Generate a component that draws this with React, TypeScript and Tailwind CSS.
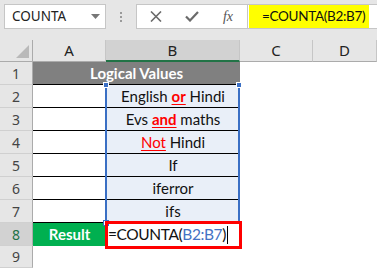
const cellFont = { fontFamily: "Lato, 'Liberation Sans', sans-serif" };
const uiFont = { fontFamily: "'Noto Sans', 'Open Sans', sans-serif" };

const values: { key: string; node: React.ReactNode }[] = [
  {
    key: "2",
    node: (
      <span>
        English <b className="text-[#ff0000] underline decoration-1 underline-offset-2">or</b> Hindi
      </span>
    ),
  },
  {
    key: "3",
    node: (
      <span>
        Evs <b className="text-[#ff0000] underline decoration-1 underline-offset-2">and</b> maths
      </span>
    ),
  },
  {
    key: "4",
    node: (
      <span>
        <span className="text-[#ff0000] underline decoration-1 underline-offset-2">Not</span> Hindi
      </span>
    ),
  },
  { key: "5", node: "If" },
  { key: "6", node: "iferror" },
  { key: "7", node: "ifs" },
];

function RowHead({ n, active = false }: { n: string; active?: boolean }) {
  return (
    <div
      style={uiFont}
      className={`flex items-center justify-center border-r border-b border-r-[#ababab] border-b-[#d0d0d0] text-[14px] ${
        active ? "bg-[#d2d2d2] text-[#217346]" : "bg-[#e6e6e6] text-[#444]"
      }`}
    >
      {n}
    </div>
  );
}

function Toolbar() {
  return (
    <div className="flex h-[40px] items-start pl-[4px] pt-[4px]">
      <div
        style={uiFont}
        className="flex h-[25px] w-[102px] shrink-0 items-center justify-between border border-[#c6c6c6] bg-white pl-[7px] pr-[5px] text-[13.5px] text-[#222]"
      >
        <span>COUNTA</span>
        <svg width="9" height="5" viewBox="0 0 9 5">
          <path d="M0 0h9L4.5 5z" fill="#777" />
        </svg>
      </div>
      <div className="flex h-[25px] w-[30px] shrink-0 flex-col items-center justify-center gap-[2px]">
        <div className="h-[2px] w-[2px] bg-[#9a9a9a]" />
        <div className="h-[2px] w-[2px] bg-[#9a9a9a]" />
        <div className="h-[2px] w-[2px] bg-[#9a9a9a]" />
      </div>
      <div className="flex h-[25px] w-[260px] shrink-0 border border-[#c6c6c6] bg-white">
        <div className="flex w-[111px] shrink-0 items-center border-r border-[#c6c6c6]">
          <div className="flex w-[37px] justify-center pl-[1px]">
            <svg width="12" height="11" viewBox="0 0 12 11">
              <path d="M1 0.5l10 10M11 0.5l-10 10" stroke="#6a6a6a" strokeWidth="1.6" />
            </svg>
          </div>
          <div className="flex w-[36px] justify-center">
            <svg width="14" height="11" viewBox="0 0 14 11">
              <path d="M1 5.5l4 4L13 1" stroke="#6a6a6a" strokeWidth="2.2" fill="none" />
            </svg>
          </div>
          <div
            className="flex w-[36px] justify-center text-[14px] italic text-[#555]"
            style={{ fontFamily: "'Liberation Serif', serif" }}
          >
            fx
          </div>
        </div>
        <div className="flex shrink-0 items-stretch pl-[1px]">
          <div
            style={cellFont}
            className="flex w-[120px] items-center whitespace-nowrap bg-[#ffff00] pl-[13px] text-[13.5px] tracking-[-0.3px] text-[#111]"
          >
            =COUNTA(B2:B7)
          </div>
        </div>
      </div>
    </div>
  );
}

export default function App() {
  return (
    <div className="h-[268px] w-[377px] overflow-hidden bg-[#e6e6e6]">
      <Toolbar />
      <div className="relative grid grid-cols-[33px_73px_134px_73px_64px] grid-rows-[22px_repeat(8,23px)_22px] bg-white">
        {/* column headers */}
        <div className="relative border-r border-b border-r-[#ababab] border-b-[#ababab] bg-[#e6e6e6]">
          <svg className="absolute bottom-[3px] right-[3px]" width="13" height="13" viewBox="0 0 13 13">
            <path d="M13 0V13H0z" fill="#b9b9b9" />
          </svg>
        </div>
        {["A", "B", "C", "D"].map((c) => (
          <div
            key={c}
            style={uiFont}
            className={`flex items-center justify-center border-r border-r-[#c6c6c6] text-[15px] text-[#222] ${
              c === "B"
                ? "border-b-2 border-b-[#217346] bg-[#d2d2d2]"
                : "border-b border-b-[#ababab] bg-[#e6e6e6]"
            }`}
          >
            {c}
          </div>
        ))}

        {/* row 1 */}
        <RowHead n="1" />
        <div
          style={cellFont}
          className="col-span-2 flex items-center justify-center border-b border-black bg-[#808080] text-[15px] font-bold text-white"
        >
          Logical Values
        </div>
        <div />
        <div />

        {/* rows 2-7 */}
        {values.map((v) => (
          <div key={v.key} className="contents">
            <RowHead n={v.key} />
            <div className="border-b border-black" />
            <div
              style={cellFont}
              className="flex items-center justify-center border-b border-black bg-[#e9eff8] text-[15px] text-[#111]"
            >
              {v.node}
            </div>
            <div />
            <div />
          </div>
        ))}

        {/* row 8 */}
        <RowHead n="8" active />
        <div
          style={cellFont}
          className="flex items-center justify-center bg-[#00b050] text-[15px] font-bold text-white"
        >
          Result
        </div>
        <div
          style={cellFont}
          className="relative flex items-center whitespace-nowrap pl-[2px] text-[15.5px] tracking-[-0.4px] text-[#111]"
        >
          <span>
            =COUNTA(<span className="text-[#4472c4]">B2:B7</span>)
          </span>
          <span className="ml-[1px] h-[18px] w-[1px] bg-black" />
          <div className="absolute -left-[1px] -right-[2px] -top-[2px] -bottom-[3px] z-10 border-[3px] border-[#ff0000]" />
        </div>
        <div />
        <div />

        {/* row 9 */}
        <RowHead n="9" />
        <div />
        <div />
        <div />
        <div />

        {/* reference highlight around B2:B7 */}
        <div className="pointer-events-none absolute left-[105px] top-[45px] h-[138px] w-[135px] border-x-2 border-[#3a6fc4]">
          <div className="absolute -left-[4px] -top-[3px] h-[6px] w-[6px] border border-white bg-[#3a6fc4]" />
          <div className="absolute -right-[4px] -top-[3px] h-[6px] w-[6px] border border-white bg-[#3a6fc4]" />
          <div className="absolute -left-[4px] -bottom-[3px] h-[6px] w-[6px] border border-[#3a6fc4] bg-white" />
        </div>
      </div>
    </div>
  );
}
